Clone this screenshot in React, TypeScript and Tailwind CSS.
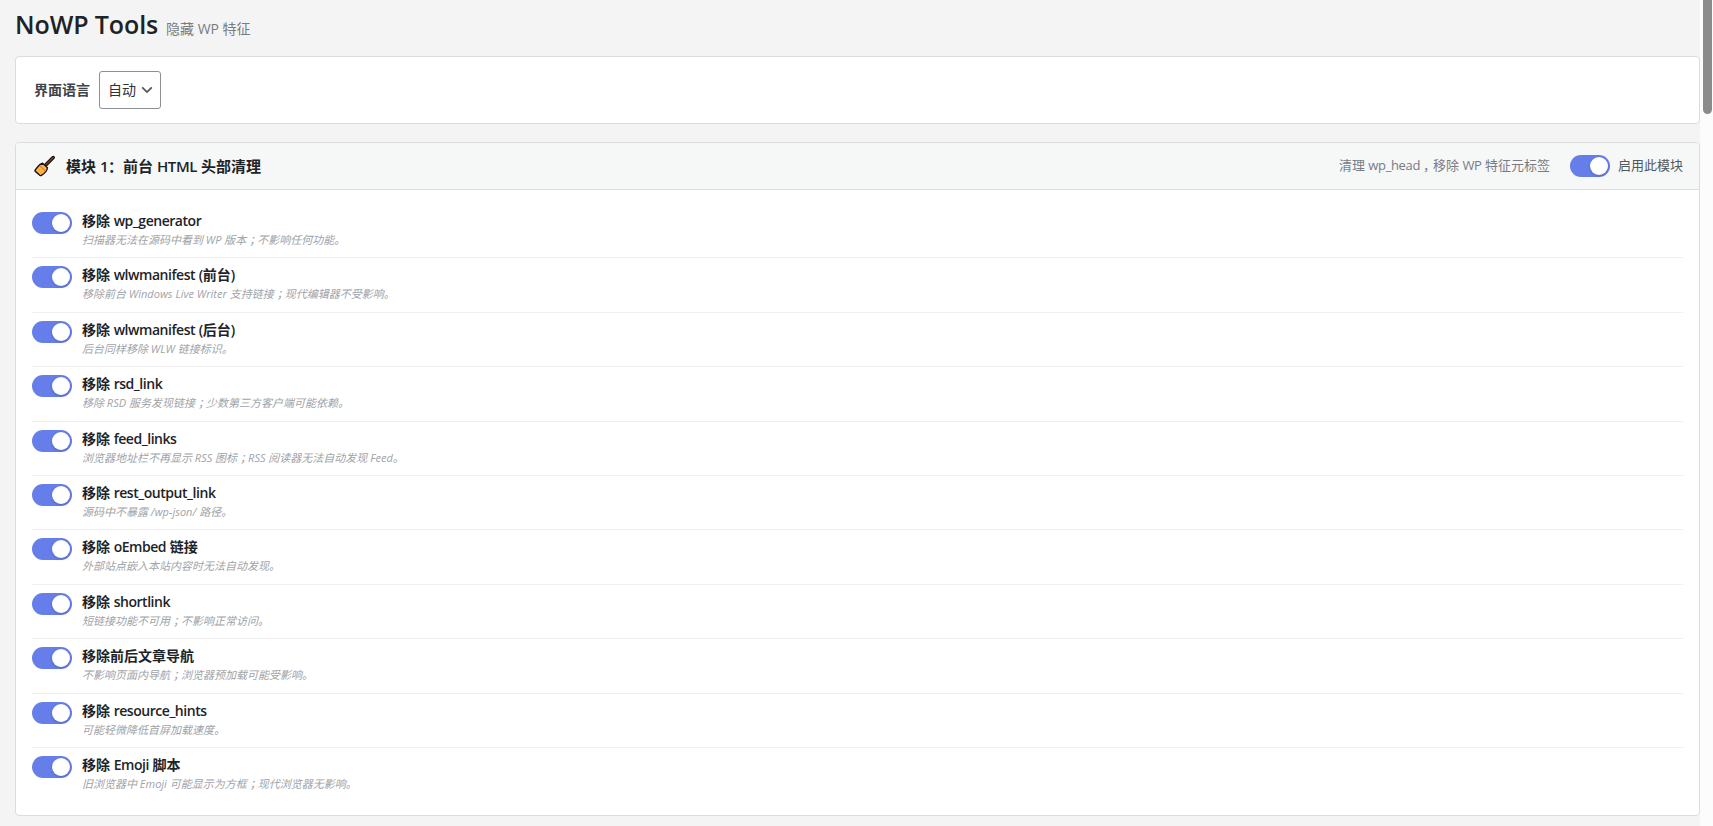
import React, { useState } from 'react';

interface Option {
    label: string;
    hint: string;
}

const OPTIONS: Option[] = [
    { label: '移除 wp_generator', hint: '扫描器无法在源码中看到 WP 版本；不影响任何功能。' },
    { label: '移除 wlwmanifest (前台)', hint: '移除前台 Windows Live Writer 支持链接；现代编辑器不受影响。' },
    { label: '移除 wlwmanifest (后台)', hint: '后台同样移除 WLW 链接标识。' },
    { label: '移除 rsd_link', hint: '移除 RSD 服务发现链接；少数第三方客户端可能依赖。' },
    { label: '移除 feed_links', hint: '浏览器地址栏不再显示 RSS 图标；RSS 阅读器无法自动发现 Feed。' },
    { label: '移除 rest_output_link', hint: '源码中不暴露 /wp-json/ 路径。' },
    { label: '移除 oEmbed 链接', hint: '外部站点嵌入本站内容时无法自动发现。' },
    { label: '移除 shortlink', hint: '短链接功能不可用；不影响正常访问。' },
    { label: '移除前后文章导航', hint: '不影响页面内导航；浏览器预加载可能受影响。' },
    { label: '移除 resource_hints', hint: '可能轻微降低首屏加载速度。' },
    { label: '移除 Emoji 脚本', hint: '旧浏览器中 Emoji 可能显示为方框；现代浏览器无影响。' },
];

// Centres full-width commas, semicolons in their cell and tightens the Latin runs
const Text: React.FC<{ children: string; latin?: string }> = ({ children, latin = '' }) => (
    <>
        {children.split(/([；，]|[\x21-\x7e]+)/).map((part, i) => {
            if (part === '；' || part === '，') return <span key={i} className="ml-[3px] -mr-[3px]">{part}</span>;
            if (/^[\x21-\x7e]/.test(part)) return <span key={i} className={latin}>{part}</span>;
            return part;
        })}
    </>
);

const Toggle: React.FC<{ checked: boolean; onChange: () => void }> = ({ checked, onChange }) => (
    <button
        role="switch"
        aria-checked={checked}
        onClick={onChange}
        className={`flex h-[22px] w-10 shrink-0 items-center rounded-full px-0.5 ${checked ? 'justify-end bg-[#667eea]' : 'justify-start bg-[#c3c4c7]'}`}
    >
        <span className="size-[18px] rounded-full bg-white shadow-[0_1px_3px_rgba(0,0,0,0.2)]" />
    </button>
);

const Broom = () => (
    <svg width="22" height="22" viewBox="0 0 22 22" className="shrink-0">
        <path d="M12 9.8 19.2 2.6" stroke="#1b1512" strokeWidth="3.6" strokeLinecap="round" />
        <path d="M12 9.8 19.2 2.6" stroke="#6b3f27" strokeWidth="1.4" strokeLinecap="round" />
        <path
            d="M8.6 8.2 13.4 12.8C13.2 15.2 10.8 18.4 7.4 20.4 6.8 20.8 6.2 20.6 5.8 20.2L1.4 16.4C.8 15.8.9 15.2 1.4 14.7L4.2 11.2C5.4 9.8 7 8.8 8.6 8.2Z"
            fill="#fcb94b"
            stroke="#1b1512"
            strokeWidth="1.4"
            strokeLinejoin="round"
        />
        <path d="M5.9 10.8 11.3 16" stroke="#ef7d35" strokeWidth="1.5" />
        <path d="M4.6 15.8 6.4 14M6.6 17.8 8.4 16" stroke="#e58a2c" strokeWidth="0.8" />
    </svg>
);

export default function App() {
    const [enabled, setEnabled] = useState(true);
    const [checked, setChecked] = useState(OPTIONS.map(() => true));

    const flip = (index: number) => setChecked(checked.map((c, i) => (i === index ? !c : c)));

    return (
        <div className="flex h-[826px] overflow-hidden bg-[#f4f4f4] font-['Open_Sans','Noto_Sans_CJK_SC',sans-serif] text-[#1d2327]">
            <main className="flex min-w-0 flex-1 flex-col pl-[15px]">
                <header className="flex h-14 items-baseline pt-1.5">
                    <h1 className="w-[144px] text-[25px] leading-9 font-semibold tracking-[-0.1px] whitespace-nowrap">NoWP Tools</h1>
                    <span className="ml-[7px] text-sm text-[#787c82]">隐藏 WP 特征</span>
                </header>

                <section className="flex h-[68px] shrink-0 items-center rounded-[4px] border border-[#dcdcde] bg-white px-[18px]">
                    <span className="pb-px text-sm font-semibold text-[#3c434a]">界面语言</span>
                    <button className="ml-[9px] flex h-[38px] w-[62px] items-center rounded-[3px] border border-[#8c8f94] pl-2 text-sm text-[#2c3338]">
                        自动
                        <svg width="12" height="8" viewBox="0 0 12 8" fill="none" className="ml-[5px] shrink-0">
                            <path d="M1.2 1.4 6 6.1 10.8 1.4" stroke="#50575e" strokeWidth="1.8" />
                        </svg>
                    </button>
                </section>

                <section className="mt-[18px] h-[674px] shrink-0 overflow-hidden rounded-[4px] border border-[#dcdcde] bg-white">
                    <div className="flex h-[47px] items-center border-b border-[#dcdcde] bg-[#f6f7f7] px-4">
                        <span className="ml-0.5 flex"><Broom /></span>
                        <h2 className="ml-2.5 text-[15px] font-semibold"><Text latin="tracking-[-0.4px]">模块 1：前台 HTML 头部清理</Text></h2>
                        <span className="ml-auto text-[13px] text-[#787c82]"><Text latin="tracking-[-0.35px]">清理 wp_head，移除 WP 特征元标签</Text></span>
                        <label className="ml-5 flex items-center gap-2 text-[13px] text-[#50575e]">
                            <Toggle checked={enabled} onChange={() => setEnabled(!enabled)} />
                            启用此模块
                        </label>
                    </div>

                    <ul className="px-4 pt-3.5">
                        {OPTIONS.map((option, i) => (
                            <li key={option.label} className="flex h-[54.4px] items-start gap-2.5 border-b border-[#f0f0f1] pt-2 last:border-b-0">
                                <Toggle checked={checked[i]} onChange={() => flip(i)} />
                                <div className="flex flex-col whitespace-nowrap">
                                    <span className="text-sm leading-[17px] font-semibold"><Text latin="tracking-[-0.46px]">{option.label}</Text></span>
                                    <span className="mt-0.5 text-[11px] leading-[17px] text-[#a0a3a7] italic"><Text>{option.hint}</Text></span>
                                </div>
                            </li>
                        ))}
                    </ul>
                </section>
            </main>

            <div className="w-[13px] shrink-0 bg-[#fcfcfc] pl-[3px]">
                <div className="h-[114px] w-[9px] rounded-b-full bg-[#8b8b8b]" />
            </div>
        </div>
    );
}
